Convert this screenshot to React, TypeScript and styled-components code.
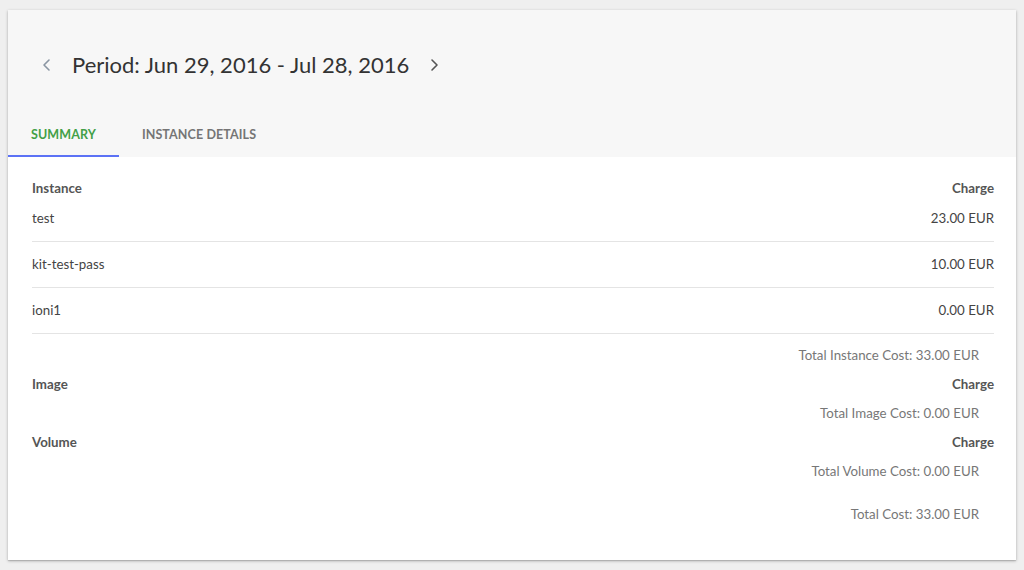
import React from 'react';
import styled, { createGlobalStyle } from 'styled-components';

const GlobalStyle = createGlobalStyle`
  html, body {
    margin: 0;
    padding: 0;
    background: #efefef;
    font-family: Lato, "Open Sans", sans-serif;
  }
`;

const Page = styled.div`
  padding: 10px 8px 10px 8px;
`;

const Card = styled.div`
  width: 1008px;
  background: #ffffff;
  box-shadow: 0 1px 3px rgba(0, 0, 0, 0.25), 0 1px 1px rgba(0, 0, 0, 0.12);
`;

const Header = styled.div`
  background: #f7f7f7;
  padding-top: 40px;
`;

const PeriodRow = styled.div`
  display: flex;
  align-items: center;
  height: 30px;
  padding-left: 26px;
  margin-bottom: 29px;
`;

const NavButton = styled.button<{ $dim?: boolean }>`
  display: flex;
  align-items: center;
  justify-content: center;
  width: 24px;
  height: 24px;
  padding: 0;
  border: none;
  background: transparent;
  color: ${(p) => (p.$dim ? '#8a96a3' : '#555555')};
  cursor: pointer;
`;

const PeriodTitle = styled.h1`
  margin: 0 14px 0 14px;
  font-size: 22px;
  font-weight: 400;
  color: #333333;
  line-height: 30px;
`;

const Tabs = styled.div`
  display: flex;
`;

const Tab = styled.div<{ $active?: boolean }>`
  box-sizing: border-box;
  display: flex;
  align-items: center;
  justify-content: center;
  height: 48px;
  padding: 4px 23px 0;
  font-size: 12.5px;
  font-weight: 700;
  letter-spacing: 0.1px;
  text-transform: uppercase;
  color: ${(p) => (p.$active ? '#43a047' : '#757575')};
  border-bottom: 2px solid ${(p) => (p.$active ? '#5c72f5' : 'transparent')};
`;

const Body = styled.div`
  padding: 23px 22px 24px 24px;
  color: #444444;
  font-size: 13.3px;
`;

const HeadRow = styled.div`
  display: flex;
  justify-content: space-between;
  height: 16px;
  line-height: 16px;
  font-weight: 700;
  color: #555555;
`;

const Row = styled.div`
  display: flex;
  justify-content: space-between;
  height: 45px;
  line-height: 45px;
  border-bottom: 1px solid #e4e4e4;
`;

const TotalRow = styled.div<{ $tall?: boolean }>`
  height: ${(p) => (p.$tall ? 44 : 42)}px;
  line-height: ${(p) => (p.$tall ? 44 : 42)}px;
  text-align: right;
  padding-right: 15px;
  color: #777777;
`;

const Chevron = ({ dir }: { dir: 'left' | 'right' }) => (
  <svg width="24" height="24" viewBox="0 0 24 24" fill="none">
    <polyline
      points={dir === 'left' ? '15,7 10,12 15,17' : '9,7 14,12 9,17'}
      stroke="currentColor"
      strokeWidth="1.6"
      strokeLinecap="round"
      strokeLinejoin="round"
    />
  </svg>
);

const instances = [
  { name: 'test', charge: '23.00 EUR' },
  { name: 'kit-test-pass', charge: '10.00 EUR' },
  { name: 'ioni1', charge: '0.00 EUR' },
];

const App: React.FC = () => {
  return (
    <Page>
      <GlobalStyle />
      <Card>
        <Header>
          <PeriodRow>
            <NavButton $dim aria-label="previous">
              <Chevron dir="left" />
            </NavButton>
            <PeriodTitle>Period: Jun 29, 2016 - Jul 28, 2016</PeriodTitle>
            <NavButton aria-label="next">
              <Chevron dir="right" />
            </NavButton>
          </PeriodRow>
          <Tabs>
            <Tab $active>Summary</Tab>
            <Tab>Instance Details</Tab>
          </Tabs>
        </Header>
        <Body>
          <HeadRow>
            <span>Instance</span>
            <span>Charge</span>
          </HeadRow>
          {instances.map((item) => (
            <Row key={item.name}>
              <span>{item.name}</span>
              <span>{item.charge}</span>
            </Row>
          ))}
          <TotalRow>Total Instance Cost: 33.00 EUR</TotalRow>
          <HeadRow>
            <span>Image</span>
            <span>Charge</span>
          </HeadRow>
          <TotalRow>Total Image Cost: 0.00 EUR</TotalRow>
          <HeadRow>
            <span>Volume</span>
            <span>Charge</span>
          </HeadRow>
          <TotalRow>Total Volume Cost: 0.00 EUR</TotalRow>
          <TotalRow $tall>Total Cost: 33.00 EUR</TotalRow>
        </Body>
      </Card>
    </Page>
  );
};

export default App;
